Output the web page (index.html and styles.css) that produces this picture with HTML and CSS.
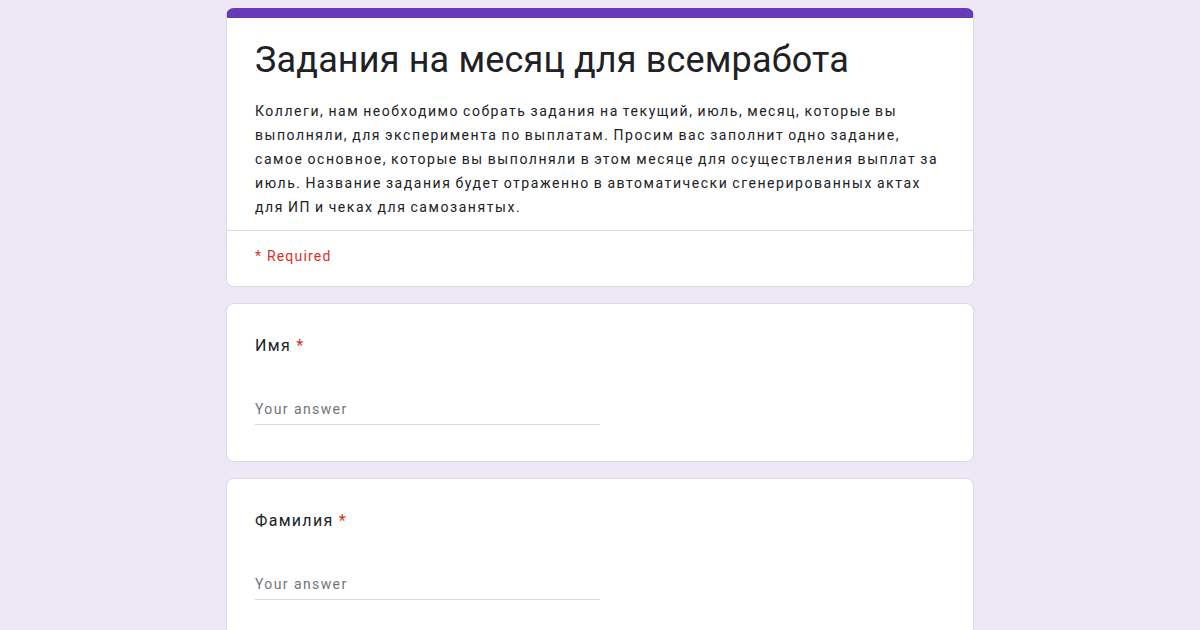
FILE: index.html
```html
<!DOCTYPE html>
<html lang="ru">
<head>
<meta charset="utf-8">
<title>Задания на месяц для всемработа</title>
<link rel="stylesheet" href="styles.css">
</head>
<body>
<main class="form">
  <section class="card header-card">
    <div class="header-top">
      <h1 class="title">Задания на месяц для всемработа</h1>
      <p class="desc">Коллеги, нам необходимо собрать задания на текущий, июль, месяц, которые вы<br>выполняли, для эксперимента по выплатам. Просим вас заполнит одно задание,<br>самое основное, которые вы выполняли в этом месяце для осуществления выплат за<br>июль. Название задания будет отраженно в автоматически сгенерированных актах<br>для ИП и чеках для самозанятых.</p>
    </div>
    <div class="required-note">* Required</div>
  </section>

  <section class="card question">
    <div class="q-label">Имя <span class="star">*</span></div>
    <div class="answer">Your answer</div>
  </section>

  <section class="card question">
    <div class="q-label">Фамилия <span class="star">*</span></div>
    <div class="answer">Your answer</div>
  </section>
</main>
</body>
</html>
```

FILE: styles.css
```css
html, body {
  margin: 0;
  padding: 0;
}
body {
  background: #ede7f6;
  font-family: Roboto, "Noto Sans", Arial, sans-serif;
  color: #202124;
  height: 630px;
  overflow: hidden;
}
.form {
  width: 748px;
  margin: 0 auto;
  padding-top: 8px;
  display: flex;
  flex-direction: column;
  gap: 16px;
}
.card {
  background: #fff;
  border: 1px solid #dadce0;
  border-radius: 8px;
  box-sizing: border-box;
}
.header-card {
  border-top: 10px solid #673ab7;
}
.header-top {
  padding: 18px 28px 11px 28px;
  border-bottom: 1px solid #dadce0;
}
.title {
  margin: 0;
  font-weight: 400;
  font-size: 36px;
  line-height: 48px;
  letter-spacing: 0.15px;
  color: #202124;
}
.desc {
  margin: 15px 0 0 0;
  font-size: 14px;
  line-height: 24px;
  letter-spacing: 1.55px;
  word-spacing: -1px;
  white-space: nowrap;
  color: #202124;
}
.required-note {
  padding: 13px 28px 18px 28px;
  font-size: 14px;
  line-height: 24px;
  letter-spacing: 1.2px;
  color: #d93025;
}
.question {
  padding: 30px 28px 36px 28px;
}
.q-label {
  font-size: 16px;
  line-height: 24px;
  letter-spacing: 1.3px;
  color: #202124;
}
.star {
  color: #d93025;
}
.answer {
  margin-top: 35px;
  width: 345px;
  height: 32px;
  box-sizing: border-box;
  border-bottom: 1px solid #dadce0;
  font-size: 14px;
  line-height: 32px;
  letter-spacing: 1.4px;
  color: #70757a;
}
```
